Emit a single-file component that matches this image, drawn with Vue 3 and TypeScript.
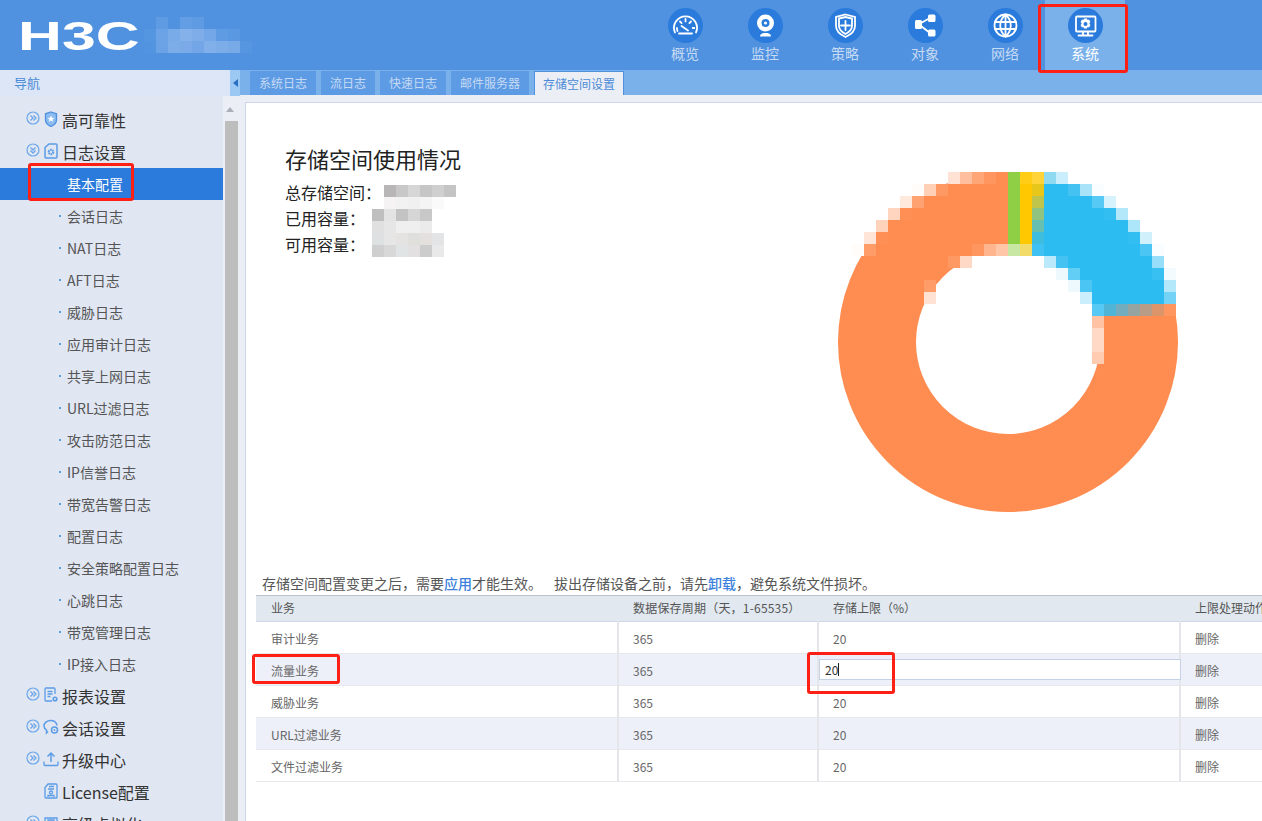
<script setup lang="ts">
type IconPath = { d: string; fill?: boolean; hole?: boolean };

const topNav: { label: string; active?: boolean; paths: IconPath[] }[] = [
  {
    label: '概览',
    paths: [
      { d: 'M7 24.5a11.5 11.5 0 1 1 21 0' },
      { d: 'M9.5 23a9 9 0 0 1 -.6 -3M12 13.5l1.6 1.6M17.5 11v2.4M23 13.5l-1.6 1.6M26.3 20h-1.6' },
      { d: 'M13.5 18l6.5 4.5', fill: false },
      { d: 'M11 25.5h13' },
    ],
  },
  {
    label: '监控',
    paths: [
      { d: 'M17.5 6.5a8.5 8.5 0 1 0 0 17a8.5 8.5 0 1 0 0 -17z', fill: true },
      { d: 'M17.5 11a4 4 0 1 0 0 8a4 4 0 1 0 0 -8z', hole: true },
      { d: 'M12 28.5c0 -2 2 -3 3.5 -3.4h4c1.500 .4 3.500 1.400 3.500 3.400z', fill: true },
    ],
  },
  {
    label: '策略',
    paths: [
      { d: 'M17.500 6.500l9.500 2.500v9c0 5 -4 8.500 -9.500 11c-5.500 -2.500 -9.500 -6 -9.500 -11v-9z' },
      { d: 'M17.500 13v9M13 17.500h9' },
      { d: 'M11 10.500l6.500 -1.500l6.500 1.500v7.500c0 3.500 -2.800 6 -6.500 8c-3.700 -2 -6.500 -4.500 -6.500 -8z' },
    ],
  },
  {
    label: '对象',
    paths: [
      { d: 'M7 13.500a1.500 1.500 0 0 1 1.500 -1.500h4a1.500 1.500 0 0 1 1.500 1.500v6a1.500 1.500 0 0 1 -1.500 1.500h-4a1.500 1.500 0 0 1 -1.500 -1.500z', fill: true },
      { d: 'M20 8a1.500 1.500 0 0 1 1.500 -1.500h4.500a1.500 1.500 0 0 1 1.500 1.500v4.500a1.500 1.500 0 0 1 -1.500 1.500h-4.500a1.500 1.500 0 0 1 -1.500 -1.500z', fill: true },
      { d: 'M20 23a1.500 1.500 0 0 1 1.500 -1.500h4.500a1.500 1.500 0 0 1 1.500 1.500v4a1.500 1.500 0 0 1 -1.500 1.500h-4.500a1.500 1.500 0 0 1 -1.500 -1.500z', fill: true },
      { d: 'M13 15l9 -5M13 18l9 7' },
    ],
  },
  {
    label: '网络',
    paths: [
      { d: 'M17.500 6.500a11 11 0 1 0 0 22a11 11 0 1 0 0 -22z' },
      { d: 'M17.500 6.500c-7 6 -7 16 0 22c7 -6 7 -16 0 -22zM17.500 6.500v22M7 14h21M7 21h21' },
    ],
  },
  {
    label: '系统',
    active: true,
    paths: [
      { d: 'M9 8.500h17.500a1 1 0 0 1 1 1v13a1 1 0 0 1 -1 1h-17.500a1 1 0 0 1 -1 -1v-13a1 1 0 0 1 1 -1z' },
      { d: 'M16 10.500h3l.5 1.500l1.500 -.5l1.500 2.500l-1 1v1l1 1l-1.500 2.500l-1.500 -.5l-.5 1.500h-3l-.5 -1.500l-1.500 .5l-1.500 -2.500l1 -1v-1l-1 -1l1.500 -2.500l1.500 .5z', fill: true },
      { d: 'M17.500 14a2 2 0 1 0 0 4a2 2 0 1 0 0 -4z', hole: true },
      { d: 'M15 24v2.500M20 24v2.500' },
      { d: 'M10.500 27.500h14' },
    ],
  },
];

const tabs = ['系统日志', '流日志', '快速日志', '邮件服务器', '存储空间设置'];

type SideIcon = 'shield' | 'doc' | 'report' | 'chat' | 'upload' | 'license' | 'adv';
type SideItem = { label: string; icon?: SideIcon; state?: 'closed' | 'open'; child?: boolean; active?: boolean };

const sideItems: SideItem[] = [
  { label: '高可靠性', icon: 'shield', state: 'closed' },
  { label: '日志设置', icon: 'doc', state: 'open' },
  { label: '基本配置', child: true, active: true },
  ...['会话日志', 'NAT日志', 'AFT日志', '威胁日志', '应用审计日志', '共享上网日志', 'URL过滤日志', '攻击防范日志', 'IP信誉日志', '带宽告警日志', '配置日志', '安全策略配置日志', '心跳日志', '带宽管理日志', 'IP接入日志'].map((label) => ({ label, child: true })),
  { label: '报表设置', icon: 'report', state: 'closed' },
  { label: '会话设置', icon: 'chat', state: 'closed' },
  { label: '升级中心', icon: 'upload', state: 'closed' },
  { label: 'License配置', icon: 'license' },
  { label: '高级虚拟化', icon: 'adv', state: 'closed' },
];

const rows = ['审计业务', '流量业务', '威胁业务', 'URL过滤业务', '文件过滤业务'];

// blurred (mosaic) patches: page area, 12px blocks
type Patch = { x: number; y: number; colors: string[][]; };
const toBlocks = (p: Patch) =>
  p.colors.flatMap((row, r) =>
    row.map((c, i) => ({ key: `${p.x}-${r}-${i}`, left: p.x + i * 12, top: p.y + r * 12, color: c })),
  ).filter((b) => b.color !== '');

const logoBlocks = toBlocks({
  x: 144,
  y: 17,
  colors: [
    ['', '#5f9be3', '', '#639ee4', '#5f9be3', '', '', '', ''],
    ['#5596e1', '#6ca3e6', '#79abe8', '#84b1ea', '#7eade9', '#74a7e7', '#5e9be3', '#5a98e2', ''],
    ['#5294e0', '#6ba2e5', '#7dade8', '#7aabe8', '#72a6e7', '#80afe9', '#7dade8', '#78aae8', '#5696e1'],
  ],
});

const infoBlocks = toBlocks({
  x: 372,
  y: 185,
  colors: [
    ['', '#b8b6b6', '#c8c8c8', '#d6d6d6', '#c6c6c6', '#cfcfcf', '#c4c4c4'],
    ['', '#f5f3f3', '#f2f2f2', '#f0f0f0', '#f4f4f4', '#fafafa', ''],
    ['#c0bfbf', '#e4e3e3', '#c3c3c3', '#d6d6d6', '#c8c8c8', '', ''],
    ['#e0e0e0', '#e6e6e6', '#efefef', '#efefef', '#ebebeb', '', ''],
    ['#dde1e2', '#e6e6e6', '#e5e3e1', '#dfdfdb', '#e3e0de', '#e3e4e5', ''],
    ['#cfcfcf', '#d8d8d8', '#e1e4e5', '#e2e0e0', '#cccccc', '#e8e9e8', ''],
  ],
});

// donut chart, in page coordinates; the top part of it is pixelated
const cx = 1008;
const cy = 343;
const orange = [255, 140, 80];
const green = [143, 207, 69];
const yellow = [255, 200, 0];
const blue = [45, 188, 242];
const white = [255, 255, 255];

function colorAt(x: number, y: number): number[] {
  const r = Math.hypot(x - cx, y - cy);
  if (r > 170 || r < 92) return white;
  if (x < cx || y > 311 - (x - 1134) / 6) return orange;
  if (x < 1020) return green;
  if (x < 1032 + (245 - y) / 5) return yellow;
  return blue;
}

function inMosaic(x: number, y: number): boolean {
  if (x >= 1008 && x < 1176 && y <= 305) return true;
  if (x >= 1092 && x < 1104 && y <= 353) return true;
  if (x >= 948 && x < 1008 && y <= 257) return true;
  if (x === 924 && (y === 281 || y === 293)) return true;
  return x >= 852 && y >= 185 && y <= 245 && x < 948 && Math.hypot(x + 6 - cx, y + 6 - cy) > 158;
}

const chartBlocks: { key: string; x: number; y: number; fill: string }[] = [];
for (let y = 173; y < 365; y += 12) {
  for (let x = 852; x < 1176; x += 12) {
    if (!inMosaic(x, y)) continue;
    const sum = [0, 0, 0];
    for (let i = 0; i < 6; i++) {
      for (let j = 0; j < 6; j++) {
        const c = colorAt(x + i * 2 + 1, y + j * 2 + 1);
        sum[0] += c[0];
        sum[1] += c[1];
        sum[2] += c[2];
      }
    }
    chartBlocks.push({ key: `${x}-${y}`, x, y, fill: `rgb(${sum.map((v) => Math.round(v / 36)).join(',')})` });
  }
}
</script>

<template>
  <div class="page">
    <header class="top">
      <div class="logo"><span class="logo-text">H3C</span></div>
      <nav class="top-nav">
        <a v-for="item in topNav" :key="item.label" class="top-item" :class="{ active: item.active }">
          <svg class="top-icon" viewBox="0 0 35 35" width="35" height="35">
            <circle cx="17.5" cy="17.5" r="17.5" fill="#2a7bdc" />
            <path
              v-for="p in item.paths"
              :key="p.d"
              :d="p.d"
              :fill="p.fill ? '#fff' : p.hole ? '#2a7bdc' : 'none'"
              :stroke="p.fill || p.hole ? 'none' : '#fff'"
              stroke-width="1.8"
              stroke-linecap="round"
            />
            <circle v-if="item.label === '监控'" cx="17.5" cy="15" r="1.6" fill="#fff" />
          </svg>
          <span>{{ item.label }}</span>
        </a>
      </nav>
    </header>

    <div class="body">
      <aside class="side">
        <div class="side-title">导航</div>
        <div class="side-main">
          <ul class="side-list">
            <li
              v-for="item in sideItems"
              :key="item.label"
              class="side-item"
              :class="{ child: item.child, active: item.active }"
            >
              <template v-if="!item.child">
                <svg class="toggle" viewBox="0 0 14 14" width="14" height="14">
                  <template v-if="item.state">
                    <circle cx="7" cy="7" r="6" fill="none" stroke="#6ba7e8" stroke-width="1.2" />
                    <path
                      :d="item.state === 'open' ? 'M4.500 4.500L7 7l2.500 -2.500M4.500 7.500L7 10l2.500 -2.500' : 'M4.500 4.500L7 7l-2.500 2.500M7.500 4.500L10 7l-2.500 2.500'"
                      fill="none"
                      stroke="#6ba7e8"
                      stroke-width="1.3"
                    />
                  </template>
                </svg>
                <svg class="side-icon" viewBox="0 0 16 16" width="16" height="16" fill="none" stroke="#5b9de6" stroke-width="1.3">
                  <template v-if="item.icon === 'shield'">
                    <path d="M8 1l5.500 1.800v6.200c0 3 -2 5 -5.500 6.500c-3.500 -1.500 -5.500 -3.500 -5.500 -6.500v-6.200z" fill="#8dbcf0" stroke="#4f91e0" />
                    <path d="M8 4.500l1 2.200l2.300 .2l-1.800 1.500l.6 2.300l-2.100 -1.200l-2.100 1.200l.6 -2.300l-1.800 -1.500l2.300 -.2z" fill="#fff" stroke="none" />
                  </template>
                  <template v-else-if="item.icon === 'doc'">
                    <path d="M6 1h7a1 1 0 0 1 1 1v12a1 1 0 0 1 -1 1h-10a1 1 0 0 1 -1 -1v-9.500z" stroke-width="1.500" />
                    <circle cx="8" cy="9" r="2.200" stroke-width="2.200" stroke-dasharray="1.500 .6" />
                  </template>
                  <template v-else-if="item.icon === 'report'">
                    <path d="M9 14h-6a1 1 0 0 1 -1 -1v-11a1 1 0 0 1 1 -1h8a1 1 0 0 1 1 1v5" />
                    <path d="M4.500 4.500h5M4.500 7h5M4.500 9.500h3" />
                    <circle cx="12" cy="12" r="1.800" stroke-width="1.600" />
                  </template>
                  <template v-else-if="item.icon === 'chat'">
                    <path d="M5 12.500l-1.500 1.500v-3c-1.500 -1 -2.500 -2.500 -2.500 -4c0 -3 3 -5.500 6.500 -5.500s6 2 6.500 5" stroke-width="1.500" />
                    <circle cx="11.500" cy="11" r="3" stroke-width="1.500" />
                    <circle cx="11.500" cy="11" r=".9" fill="#5b9de6" stroke="none" />
                  </template>
                  <template v-else-if="item.icon === 'upload'">
                    <path d="M8 11v-9M4.500 5.500L8 2l3.500 3.500" stroke-width="1.500" />
                    <path d="M1 10.500v3a1 1 0 0 0 1 1h12a1 1 0 0 0 1 -1v-3" />
                  </template>
                  <template v-else-if="item.icon === 'license'">
                    <path d="M5 1h8a1 1 0 0 1 1 1v12.500a.5 .5 0 0 1 -.5 .5h-10.500a1 1 0 0 1 -1 -1v-9.500z" />
                    <path d="M6 3.500h5M5 6h6" />
                    <circle cx="8" cy="9.500" r="1.500" />
                    <path d="M5 14v-1.500h6v1.500" />
                  </template>
                  <template v-else>
                    <path d="M2 3h12v7c0 2 -2.500 4 -6 5c-3.500 -1 -6 -3 -6 -5z" />
                    <path d="M5 5h6v3h-6z" />
                  </template>
                </svg>
              </template>
              <i v-else-if="!item.active" class="dot"></i>
              <span class="side-label">{{ item.label }}</span>
            </li>
          </ul>
          <div class="scrollbar">
            <div class="scroll-up"></div>
            <div class="scroll-thumb"></div>
          </div>
        </div>
      </aside>

      <main class="main">
        <div class="tabs-bar">
          <div class="collapse"><i></i></div>
          <div class="tabs">
            <a v-for="(t, i) in tabs" :key="t" class="tab" :class="{ current: i === tabs.length - 1 }">{{ t }}</a>
          </div>
        </div>

        <section class="panel">
          <div class="usage">
            <div class="info">
              <h2>存储空间使用情况</h2>
              <p>总存储空间：</p>
              <p>已用容量：</p>
              <p>可用容量：</p>
            </div>
            <svg class="chart" viewBox="830 165 360 360" width="360" height="360">
              <circle :cx="cx" :cy="cy" r="131" fill="none" :stroke="`rgb(${orange.join(',')})`" stroke-width="78" />
              <rect v-for="b in chartBlocks" :key="b.key" :x="b.x" :y="b.y" width="12" height="12" :fill="b.fill" />
            </svg>
          </div>

          <p class="notice">
            存储空间配置变更之后，需要<a>应用</a>才能生效。<span class="gap"></span>拔出存储设备之前，请先<a>卸载</a>，避免系统文件损坏。
          </p>

          <table class="grid">
            <colgroup>
              <col style="width: 362px" />
              <col style="width: 200px" />
              <col style="width: 362px" />
              <col style="width: 200px" />
            </colgroup>
            <thead>
              <tr>
                <th>业务</th>
                <th>数据保存周期（天，1-65535）</th>
                <th>存储上限（%）</th>
                <th>上限处理动作</th>
              </tr>
            </thead>
            <tbody>
              <tr v-for="(name, i) in rows" :key="name" :class="{ odd: i % 2 === 1 }">
                <td>{{ name }}</td>
                <td>365</td>
                <td :class="{ editing: i === 1 }">
                  <span v-if="i === 1" class="edit-box">
                    <input type="text" value="20" />
                    <i class="caret"></i>
                  </span>
                  <template v-else>20</template>
                </td>
                <td>删除</td>
              </tr>
            </tbody>
          </table>
        </section>
      </main>
    </div>

    <!-- mosaics laid over the hidden text -->
    <i
      v-for="b in [...logoBlocks, ...infoBlocks]"
      :key="b.key"
      class="block"
      :style="{ left: b.left + 'px', top: b.top + 'px', background: b.color }"
    ></i>

    <!-- red marks on top of the screenshot -->
    <i class="mark mark-system"></i>
    <i class="mark mark-basic"></i>
    <i class="mark mark-flow"></i>
    <i class="mark mark-limit"></i>
  </div>
</template>

<style>
html,
body {
  margin: 0;
  overflow: hidden;
}
</style>

<style scoped>
.page {
  position: relative;
  display: flex;
  flex-direction: column;
  width: 1262px;
  height: 821px;
  overflow: hidden;
  background: #eceef5;
  font-family: "Noto Sans CJK SC", "Open Sans", sans-serif;
  color: #333;
}

.top {
  display: flex;
  justify-content: space-between;
  flex: none;
  height: 70px;
  background: #5092e0;
}

.logo {
  width: 250px;
  padding: 15px 0 0 18px;
  box-sizing: border-box;
}

.logo-text {
  display: block;
  font-family: "Liberation Sans", sans-serif;
  font-weight: 700;
  font-size: 40px;
  line-height: 42px;
  color: #fff;
  transform: scaleX(1.52);
  transform-origin: left center;
}

.top-nav {
  display: flex;
  padding-right: 137px;
}

.top-item {
  display: flex;
  flex-direction: column;
  align-items: center;
  width: 80px;
  padding-top: 8px;
  box-sizing: border-box;
  font-size: 14px;
  line-height: 20px;
  color: #c6daf4;
}

.top-item.active {
  background: #7ab1ea;
  color: #fff;
}

.top-icon {
  display: block;
}

.body {
  display: flex;
  flex: 1;
  min-height: 0;
}

.side {
  display: flex;
  flex-direction: column;
  flex: none;
  width: 238px;
}

.side-title {
  flex: none;
  height: 26px;
  padding-left: 14px;
  background: #dce6f6;
  font-size: 13px;
  line-height: 25px;
  color: #4a8bd8;
}

.side-main {
  display: flex;
  flex: 1;
  min-height: 0;
}

.side-list {
  flex: 1;
  margin: 0;
  padding: 8px 0 0;
  list-style: none;
  background: #e0e6f2;
  overflow: hidden;
}

.side-item {
  display: flex;
  align-items: center;
  height: 32px;
  padding-left: 26px;
  font-size: 16px;
  color: #333;
  white-space: nowrap;
}

.side-item.child {
  padding-left: 59px;
  font-size: 14px;
  color: #555;
}

.side-item.active {
  padding-left: 67px;
  background: #2a7bdc;
  color: #fff;
}

.side-label {
  line-height: 32px;
}

.toggle {
  flex: none;
  margin-top: -4px;
}

.side-icon {
  flex: none;
  margin: -2px 3px 0 3px;
}

.dot {
  flex: none;
  width: 2px;
  height: 2px;
  margin-right: 6px;
  background: #5b9de6;
}

.scrollbar {
  flex: none;
  width: 15px;
  background: #eceef5;
}

.scroll-up {
  width: 0;
  height: 0;
  margin: 11px 0 0 3px;
  border: 4px solid transparent;
  border-top: 0;
  border-bottom: 5px solid #aab0b8;
}

.scroll-thumb {
  height: 700px;
  margin: 9px 0 0 2px;
  background: #bdbdbd;
}

.main {
  display: flex;
  flex-direction: column;
  flex: 1;
  min-width: 0;
}

.tabs-bar {
  position: relative;
  display: flex;
  flex: none;
  height: 25px;
  background: #7ab1ea;
}

.collapse {
  position: absolute;
  left: -8px;
  top: 0;
  width: 10px;
  height: 26px;
  background: #9cc8f4;
  display: flex;
  align-items: center;
  justify-content: center;
}

.collapse i {
  width: 0;
  height: 0;
  border: 4px solid transparent;
  border-left: 0;
  border-right: 5px solid #2a6fc4;
}

.tabs {
  display: flex;
  gap: 5px;
  padding: 1px 0 0 12px;
}

.tab {
  padding: 0 9px;
  background: #5d9be4;
  font-size: 12px;
  line-height: 24px;
  color: #c6daf4;
}

.tab.current {
  padding: 0 8px;
  background: #eceef5;
  border: 1px solid #4f91e0;
  border-bottom: 0;
  line-height: 23px;
  color: #4a8bd8;
}

.panel {
  flex: 1;
  min-height: 0;
  margin: 7px 0 0 7px;
  border: 1px solid #cdd6ea;
  border-right: 0;
  border-bottom: 0;
  background: #fff;
  overflow: hidden;
}

.usage {
  display: flex;
  height: 471px;
}

.info {
  flex: none;
  width: 584px;
  padding: 40px 0 0 39px;
  box-sizing: border-box;
  color: #222;
}

.info h2 {
  margin: 0 0 6px;
  font-size: 22px;
  font-weight: 400;
  line-height: 30px;
}

.info p {
  margin: 0;
  font-size: 16px;
  line-height: 26px;
}

.chart {
  flex: none;
  margin-top: 61px;
}

.notice {
  margin: 0 0 2px 16px;
  font-size: 14px;
  line-height: 19px;
  color: #555;
  white-space: nowrap;
}

.notice a {
  color: #3c82dc;
  font-weight: 500;
}

.gap {
  display: inline-block;
  width: 12px;
}

.grid {
  width: 1124px;
  margin-left: 10px;
  border-collapse: collapse;
  table-layout: fixed;
  font-size: 12px;
  color: #666;
}

.grid th {
  height: 26px;
  padding: 0 0 3px 15px;
  box-sizing: border-box;
  border-top: 1px solid #bcc3cc;
  border-bottom: 1px solid #cfd8e6;
  background: #e1e8ef;
  font-weight: 400;
  text-align: left;
  color: #555;
  white-space: nowrap;
}

.grid th:nth-child(2) {
  letter-spacing: .2px;
}

.grid td {
  height: 32px;
  padding: 1px 0 0 14px;
  box-sizing: border-box;
  border-bottom: 1px solid #e6e8ec;
  border-right: 2px solid #e4e6ea;
}

.grid td:first-child {
  padding-left: 15px;
}

.grid tr.odd td {
  background: #edf0f8;
}

.grid td.editing {
  padding: 0;
}

.edit-box {
  position: relative;
  display: block;
}

.edit-box input {
  display: block;
  width: calc(100% + 2px);
  height: 21px;
  padding: 0 0 0 5px;
  box-sizing: border-box;
  border: 1px solid #c5d1e6;
  outline: none;
  background: #fff;
  font: inherit;
  color: #333;
}

.caret {
  position: absolute;
  left: 19px;
  top: 4px;
  width: 1px;
  height: 13px;
  background: #222;
}

.block {
  position: absolute;
  width: 12px;
  height: 12px;
}

.mark {
  position: absolute;
  box-sizing: border-box;
  border: 3px solid #ff2015;
  border-radius: 3px;
}

.mark-system {
  left: 1038px;
  top: 4px;
  width: 90px;
  height: 69px;
}

.mark-basic {
  left: 28px;
  top: 163px;
  width: 106px;
  height: 38px;
}

.mark-flow {
  left: 252px;
  top: 654px;
  width: 88px;
  height: 30px;
}

.mark-limit {
  left: 807px;
  top: 652px;
  width: 88px;
  height: 42px;
}
</style>
